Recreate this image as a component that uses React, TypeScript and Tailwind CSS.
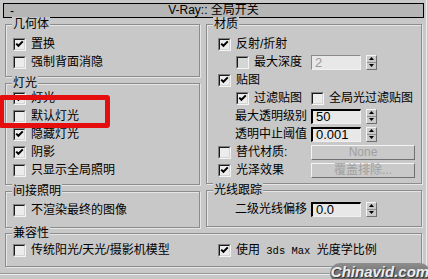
import React from "react";

function Check({ checked = false, disabled = false }: { checked?: boolean; disabled?: boolean }) {
  return (
    <div className="w-[13px] h-[13px] shrink-0 border border-t-[#808080] border-l-[#808080] border-r-[#f4f4f4] border-b-[#f4f4f4]">
      <div
        className={`w-full h-full border border-t-[#1a1a1a] border-l-[#1a1a1a] border-r-[#d4d4d4] border-b-[#d4d4d4] flex items-center justify-center ${
          disabled ? "bg-[#d6d6d6]" : "bg-[#ececec]"
        }`}
      >
        {checked && (
          <svg width="9" height="9" viewBox="0 0 9 9">
            <path d="M1.2 3.6 L3.4 5.8 L7.8 1.4" stroke="#000" strokeWidth="2" fill="none" />
          </svg>
        )}
      </div>
    </div>
  );
}

function Spinner() {
  return (
    <div className="w-[11px] h-[15px] flex flex-col border border-t-[#f4f4f4] border-l-[#f4f4f4] border-r-[#707070] border-b-[#707070] bg-[#cacaca]">
      <div className="flex-1 flex items-center justify-center border-b border-b-[#909090]">
        <svg width="5" height="3" viewBox="0 0 5 3">
          <path d="M2.5 0 L5 3 L0 3 Z" fill="#000" />
        </svg>
      </div>
      <div className="flex-1 flex items-center justify-center">
        <svg width="5" height="3" viewBox="0 0 5 3">
          <path d="M0 0 L5 0 L2.5 3 Z" fill="#000" />
        </svg>
      </div>
    </div>
  );
}

function Field({ value, disabled = false }: { value: string; disabled?: boolean }) {
  return (
    <div className="flex items-center gap-[5px]">
      <div
        className={`w-[50px] h-[15px] flex items-center pl-[3px] text-[13px] leading-[13px] bg-[#e8e8e8] ${
          disabled
            ? "border border-t-[#8a8a8a] border-l-[#8a8a8a] border-r-[#f0f0f0] border-b-[#f0f0f0] text-[#9a9a9a]"
            : "border-t-2 border-l-2 border-r border-b border-t-black border-l-black border-r-[#f0f0f0] border-b-[#f0f0f0] text-black"
        }`}
      >
        {value}
      </div>
      <Spinner />
    </div>
  );
}

function Btn({ label }: { label: string }) {
  return (
    <div className="w-[104px] h-[15px] flex items-center justify-center border border-t-[#f4f4f4] border-l-[#f4f4f4] border-r-[#707070] border-b-[#707070] bg-[#c9c9c9] text-[12px] leading-[12px] text-[#a0a0a0]">
      {label}
    </div>
  );
}

function Group({
  label,
  className,
  children,
}: {
  label: string;
  className: string;
  children?: React.ReactNode;
}) {
  return (
    <div
      className={`relative border border-[#8c8c8c] shadow-[inset_1px_1px_0_#e6e6e6,1px_1px_0_#e6e6e6] ${className}`}
    >
      <div className="absolute top-[-8px] left-[6px] px-[1px] bg-[#c8c8c8] text-[12px] leading-[14px] text-black">
        {label}
      </div>
      {children}
    </div>
  );
}

function Row({ className = "", children }: { className?: string; children?: React.ReactNode }) {
  return <div className={`h-[18px] flex items-center ${className}`}>{children}</div>;
}

function CheckItem({ label, checked = false, disabled = false }: { label: React.ReactNode; checked?: boolean; disabled?: boolean }) {
  return (
    <div className="flex items-center gap-[5px]">
      <Check checked={checked} disabled={disabled} />
      <span className="text-[12px] leading-[14px] text-black whitespace-nowrap">{label}</span>
    </div>
  );
}

export default function App() {
  return (
    <div className="relative w-[428px] h-[279px] overflow-hidden bg-[#c8c8c8] flex font-['Liberation_Sans','Noto_Sans_CJK_SC',sans-serif] select-none">
      <div className="w-[426px] flex flex-col">
        {/* Title bar */}
        <div className="ml-[3px] mt-[3px] w-[421px] h-[15px] border border-black bg-[#b6b6b6] flex items-center relative">
          <span className="pl-[6px] text-[12px] leading-[12px] text-black">-</span>
          <span className="absolute left-0 right-0 text-center text-[12px] leading-[13px] text-black">
            V-Ray:: 全局开关
          </span>
        </div>

        {/* Body */}
        <div className="flex gap-[6px] pl-[5px] mt-[6px]">
          {/* Left column */}
          <div className="w-[195px] flex flex-col gap-[6px]">
            <Group label="几何体" className="h-[53px] pt-[10px] pl-[7px]">
              <Row>
                <CheckItem label="置换" checked />
              </Row>
              <Row>
                <CheckItem label="强制背面消隐" />
              </Row>
            </Group>
            <Group label="灯光" className="h-[102px] pt-[5px] pl-[7px]">
              <Row>
                <CheckItem label="灯光" checked />
              </Row>
              <Row>
                <CheckItem label="默认灯光" />
              </Row>
              <Row>
                <CheckItem label="隐藏灯光" checked />
              </Row>
              <Row>
                <CheckItem label="阴影" checked />
              </Row>
              <Row>
                <CheckItem label="只显示全局照明" />
              </Row>
            </Group>
            <Group label="间接照明" className="h-[37px] pt-[9px] pl-[7px] mt-[0px]">
              <Row>
                <CheckItem label="不渲染最终的图像" />
              </Row>
            </Group>
          </div>

          {/* Right column */}
          <div className="w-[216px] flex flex-col gap-[6px]">
            <Group label="材质" className="h-[160px] pt-[10px]">
              <Row className="pl-[11px]">
                <CheckItem label="反射/折射" checked />
              </Row>
              <Row>
                <div className="w-[104px] pl-[29px]">
                  <CheckItem label="最大深度" disabled />
                </div>
                <Field value="2" disabled />
              </Row>
              <Row className="pl-[11px]">
                <CheckItem label="贴图" checked />
              </Row>
              <Row>
                <div className="w-[104px] pl-[29px]">
                  <CheckItem label="过滤贴图" checked />
                </div>
                <CheckItem label="全局光过滤贴图" />
              </Row>
              <Row>
                <div className="w-[104px] pl-[28px] text-[12px] leading-[14px] whitespace-nowrap">最大透明级别</div>
                <Field value="50" />
              </Row>
              <Row>
                <div className="w-[104px] pl-[28px] text-[12px] leading-[14px] whitespace-nowrap">透明中止阈值</div>
                <Field value="0.001" />
              </Row>
              <Row>
                <div className="w-[104px] pl-[11px]">
                  <CheckItem label="替代材质:" />
                </div>
                <Btn label="None" />
              </Row>
              <Row>
                <div className="w-[104px] pl-[11px]">
                  <CheckItem label="光泽效果" checked />
                </div>
                <Btn label="覆盖排除..." />
              </Row>
            </Group>
            <Group label="光线跟踪" className="h-[37px] pt-[9px]">
              <Row>
                <div className="w-[104px] pl-[28px] text-[12px] leading-[14px] whitespace-nowrap">二级光线偏移</div>
                <Field value="0.0" />
              </Row>
            </Group>
          </div>
        </div>

        {/* Compatibility */}
        <div className="pl-[5px] mt-[5px]">
          <Group label="兼容性" className="w-[417px] h-[34px] pt-[7px] pl-[7px]">
            <Row>
              <div className="w-[205px]">
                <CheckItem label="传统阳光/天光/摄影机模型" />
              </div>
              <CheckItem
                checked
                label={
                  <>
                    使用
                    <span className="font-['Liberation_Mono',monospace] text-[10.5px]"> 3ds Max </span>
                    光度学比例
                  </>
                }
              />
            </Row>
          </Group>
        </div>

        <div className="mt-[6px] h-px bg-[#9a9a9a]" />
        <div className="h-px bg-[#ececec]" />
      </div>
      <div className="w-px bg-[#ececec]" />
      <div className="w-px bg-[#c8c8c8]" />

      {/* Red highlight */}
      <div className="absolute left-[-1px] top-[95px] w-[111px] h-[33px] border-[5px] border-[#e50d0d] rounded-[3px]" />

      {/* Watermark */}
      <div className="absolute left-[330px] top-[263px] w-[100px] h-[20px] rounded-full bg-gradient-to-b from-[#8e8e8e] to-[#5e5e5e] flex items-start justify-center pt-[1px]">
        <span className="italic font-bold text-[15px] leading-[16px] text-[#ececec] [text-shadow:1px_1px_0_#3a3a3a] font-['Liberation_Sans',sans-serif]">
          Chinavid.com
        </span>
      </div>
    </div>
  );
}
